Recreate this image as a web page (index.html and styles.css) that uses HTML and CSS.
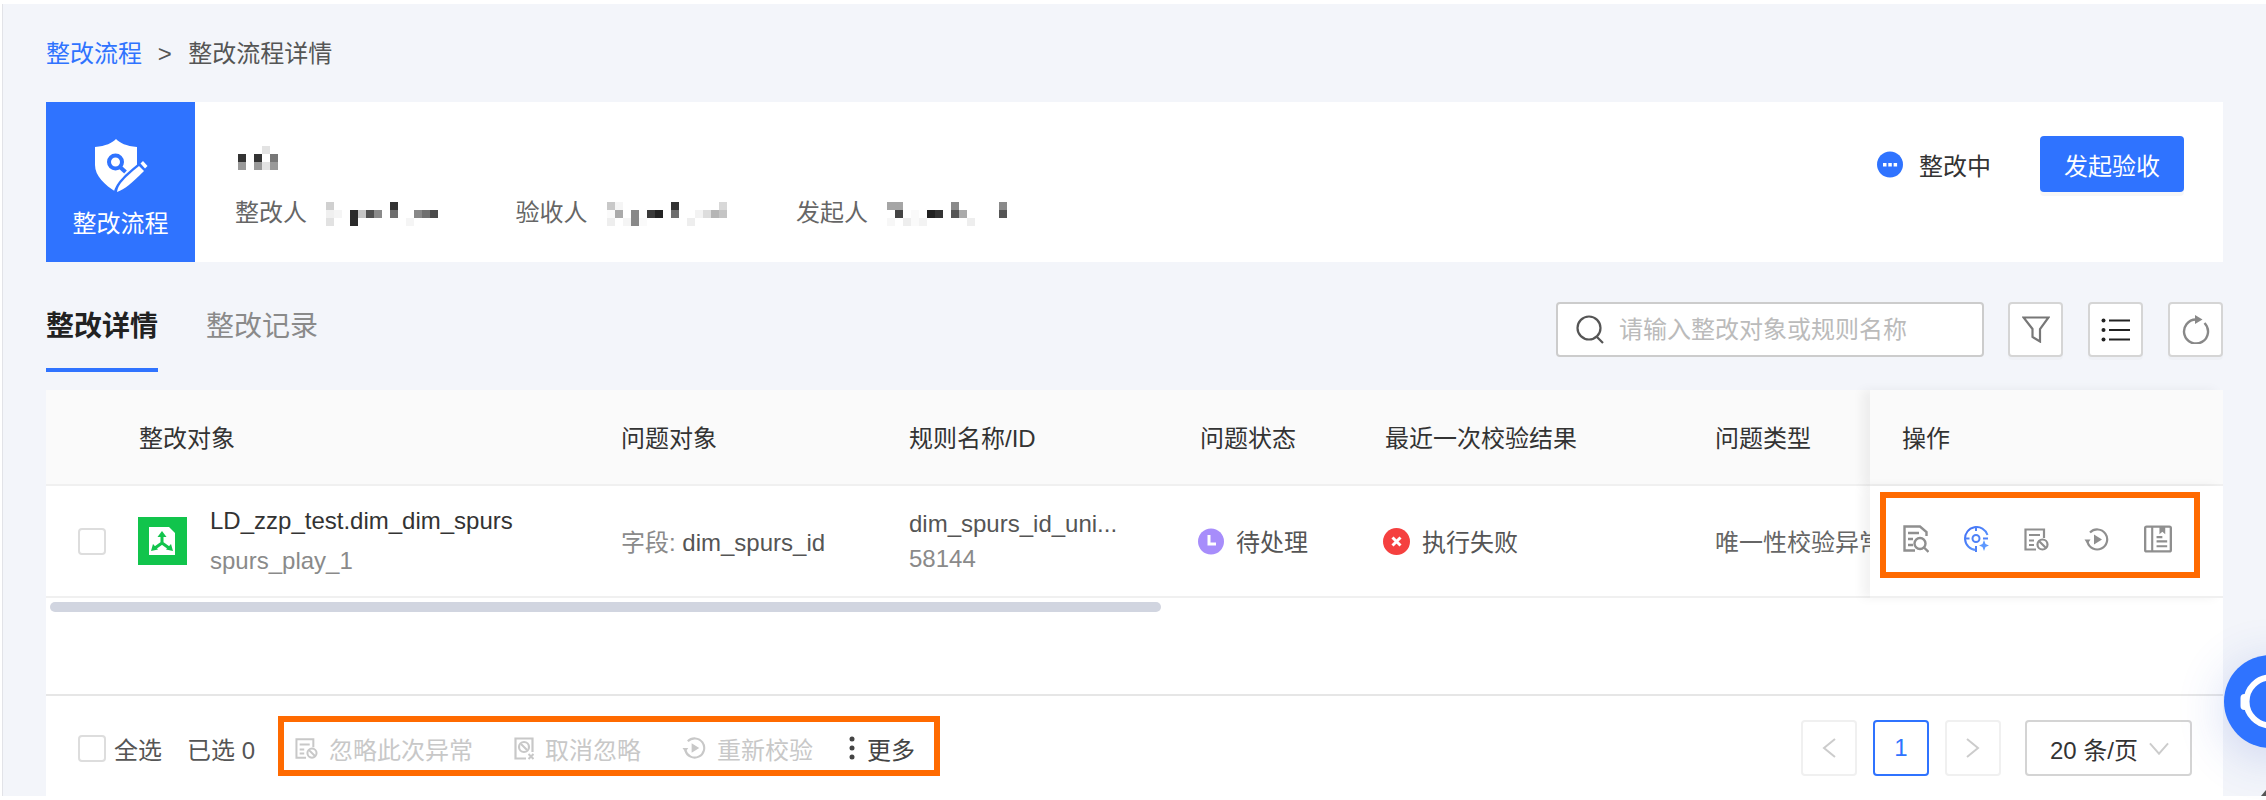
FILE: index.html
```html
<!DOCTYPE html>
<html lang="zh-CN">
<head>
    <meta charset="UTF-8">
    <title>整改流程详情</title>
    <link rel="stylesheet" href="styles.css">
</head>
<body>
    <svg class="icon-defs" width="0" height="0">
        <symbol id="i-ban" viewBox="0 0 25 23">
            <path d="M20 10V1.500H1.500V21.500H12" fill="none" stroke="currentColor" stroke-width="2.200"/>
            <path d="M5 7H16M5 12.500H10M5 17H10" fill="none" stroke="currentColor" stroke-width="2.200"/>
            <circle cx="18.500" cy="16.500" r="5" fill="none" stroke="currentColor" stroke-width="2.200"/>
            <path d="M15 13L22 20" stroke="currentColor" stroke-width="2.200"/>
        </symbol>
        <symbol id="i-replay" viewBox="0 0 25 23">
            <path d="M3.500 14A10 10 0 1 0 6 4.500" fill="none" stroke="currentColor" stroke-width="2.200"/>
            <path d="M0.500 11.500H6.500L3.500 16Z" fill="currentColor"/>
            <path d="M10 6.500L18 11.500L10 16.500Z" fill="currentColor"/>
        </symbol>
    </svg>

    <div class="page">
        <div class="breadcrumb">
            <a class="crumb-link">整改流程</a>
            <span class="crumb-sep">&gt;</span>
            <span>整改流程详情</span>
        </div>

        <div class="header-card">
            <div class="flow-badge">
                <svg width="56" height="56" viewBox="0 0 56 56">
                    <path d="M23 1C27 5 33 8 44 9V27C44 38 34 47 23 54C12 47 2 38 2 27V9C13 8 19 5 23 1Z" fill="#fff"/>
                    <path d="M20 57C22 46 29 38 50 22L58 30L30 58Z" fill="#2f73ff"/>
                    <path d="M24 54C25 47 29 42 46 28L51 33C38 46 32 51 24 54Z" fill="#fff"/>
                    <path d="M47.500 25.500L50 23L54.500 28L52 30.500Z" fill="#fff"/>
                    <circle cx="22.500" cy="24" r="6.500" fill="none" stroke="#2f73ff" stroke-width="4"/>
                    <path d="M27 29L32.500 34" stroke="#2f73ff" stroke-width="4"/>
                </svg>
                <span>整改流程</span>
            </div>
            <div class="flow-info">
                <svg class="mosaic-name" width="40" height="24" viewBox="0 0 40 24" shape-rendering="crispEdges">
                    <rect x="24" y="0" width="8" height="8" fill="#e3e3e3"/>
                    <rect x="0" y="8" width="8" height="8" fill="#333"/>
                    <rect x="16" y="8" width="8" height="8" fill="#333"/>
                    <rect x="32" y="8" width="8" height="8" fill="#777"/>
                    <rect x="0" y="16" width="8" height="8" fill="#999"/>
                    <rect x="16" y="16" width="8" height="8" fill="#999"/>
                    <rect x="24" y="16" width="8" height="8" fill="#e3e3e3"/>
                    <rect x="32" y="16" width="8" height="8" fill="#999"/>
                </svg>
                <div class="people">
                    <div class="person">
                        <span>整改人</span>
                        <svg class="mosaic" width="112" height="24" viewBox="0 0 112 24" shape-rendering="crispEdges">
                            <rect x="0" y="0" width="8" height="8" fill="#d0d0d0"/>
                            <rect x="64" y="0" width="8" height="8" fill="#333"/>
                            <rect x="0" y="8" width="8" height="8" fill="#f0f0f0"/>
                            <rect x="8" y="8" width="8" height="8" fill="#f5f5f5"/>
                            <rect x="24" y="8" width="8" height="8" fill="#2a2a2a"/>
                            <rect x="32" y="8" width="8" height="8" fill="#c4c4c4"/>
                            <rect x="40" y="8" width="8" height="8" fill="#4f4f4f"/>
                            <rect x="48" y="8" width="8" height="8" fill="#8a8a8a"/>
                            <rect x="64" y="8" width="8" height="8" fill="#6e6e6e"/>
                            <rect x="88" y="8" width="8" height="8" fill="#888"/>
                            <rect x="96" y="8" width="8" height="8" fill="#707070"/>
                            <rect x="104" y="8" width="8" height="8" fill="#4a4a4a"/>
                            <rect x="0" y="16" width="8" height="8" fill="#e2e2e2"/>
                            <rect x="24" y="16" width="8" height="8" fill="#2a2a2a"/>
                            <rect x="80" y="16" width="8" height="8" fill="#f5f5f5"/>
                        </svg>
                    </div>
                    <div class="person">
                        <span>验收人</span>
                        <svg class="mosaic" width="120" height="24" viewBox="0 0 120 24" shape-rendering="crispEdges">
                            <rect x="0" y="0" width="8" height="8" fill="#c8c8c8"/>
                            <rect x="8" y="0" width="8" height="8" fill="#f5f5f5"/>
                            <rect x="64" y="0" width="8" height="8" fill="#333"/>
                            <rect x="112" y="0" width="8" height="8" fill="#d8d8d8"/>
                            <rect x="0" y="8" width="8" height="8" fill="#fafafa"/>
                            <rect x="8" y="8" width="8" height="8" fill="#aaa"/>
                            <rect x="24" y="8" width="8" height="8" fill="#888"/>
                            <rect x="40" y="8" width="8" height="8" fill="#3a3a3a"/>
                            <rect x="48" y="8" width="8" height="8" fill="#222"/>
                            <rect x="64" y="8" width="8" height="8" fill="#6e6e6e"/>
                            <rect x="88" y="8" width="8" height="8" fill="#f3f3f3"/>
                            <rect x="96" y="8" width="8" height="8" fill="#ddd"/>
                            <rect x="104" y="8" width="8" height="8" fill="#b5b5b5"/>
                            <rect x="112" y="8" width="8" height="8" fill="#c4c4c4"/>
                            <rect x="0" y="16" width="8" height="8" fill="#eee"/>
                            <rect x="16" y="16" width="8" height="8" fill="#f5f5f5"/>
                            <rect x="24" y="16" width="8" height="8" fill="#888"/>
                            <rect x="32" y="16" width="8" height="8" fill="#fafafa"/>
                            <rect x="80" y="16" width="8" height="8" fill="#eee"/>
                        </svg>
                    </div>
                    <div class="person">
                        <span>发起人</span>
                        <svg class="mosaic" width="120" height="24" viewBox="0 0 120 24" shape-rendering="crispEdges">
                            <rect x="0" y="0" width="16" height="8" fill="#a5a5a5"/>
                            <rect x="64" y="0" width="8" height="8" fill="#8a8a8a"/>
                            <rect x="112" y="0" width="8" height="8" fill="#8a8a8a"/>
                            <rect x="8" y="8" width="8" height="8" fill="#444"/>
                            <rect x="24" y="8" width="8" height="8" fill="#fafafa"/>
                            <rect x="40" y="8" width="8" height="8" fill="#222"/>
                            <rect x="48" y="8" width="8" height="8" fill="#333"/>
                            <rect x="64" y="8" width="8" height="8" fill="#555"/>
                            <rect x="72" y="8" width="8" height="8" fill="#aaa"/>
                            <rect x="112" y="8" width="8" height="8" fill="#555"/>
                            <rect x="0" y="16" width="8" height="8" fill="#f7f7f7"/>
                            <rect x="16" y="16" width="8" height="8" fill="#eee"/>
                            <rect x="24" y="16" width="8" height="8" fill="#fafafa"/>
                            <rect x="32" y="16" width="8" height="8" fill="#f3f3f3"/>
                            <rect x="80" y="16" width="8" height="8" fill="#eee"/>
                        </svg>
                    </div>
                </div>
            </div>
            <div class="flow-state">
                <svg width="26" height="27" viewBox="0 0 26 27">
                    <circle cx="13" cy="13.500" r="13" fill="#2f73ff"/>
                    <rect x="6" y="12" width="3.500" height="3.500" fill="#fff"/>
                    <rect x="11.300" y="12" width="3.500" height="3.500" fill="#fff"/>
                    <rect x="16.600" y="12" width="3.500" height="3.500" fill="#fff"/>
                </svg>
                <span>整改中</span>
            </div>
            <button class="primary-btn">发起验收</button>
        </div>

        <div class="toolbar">
            <div class="tabs">
                <div class="tab active">整改详情</div>
                <div class="tab">整改记录</div>
            </div>
            <div class="tools">
                <div class="search-box">
                    <svg width="29" height="29" viewBox="0 0 29 29">
                        <circle cx="13" cy="13" r="11.500" fill="none" stroke="#555" stroke-width="2.200"/>
                        <path d="M21 22L27 28" stroke="#555" stroke-width="2.200"/>
                    </svg>
                    <input class="search-input" type="text" placeholder="请输入整改对象或规则名称">
                </div>
                <button class="tool-btn">
                    <svg width="28" height="27" viewBox="0 0 28 27">
                        <path d="M1.500 1.500H26.500L18 13V25.500L10.500 21V13Z" fill="none" stroke="#777" stroke-width="2.200"/>
                    </svg>
                </button>
                <button class="tool-btn">
                    <svg width="29" height="24" viewBox="0 0 29 24">
                        <circle cx="2.500" cy="2.500" r="2" fill="#222"/>
                        <circle cx="2.500" cy="12" r="2" fill="#222"/>
                        <circle cx="2.500" cy="21.500" r="2" fill="#222"/>
                        <path d="M8 2.500H29M8 12H29M8 21.500H29" stroke="#222" stroke-width="2.200"/>
                    </svg>
                </button>
                <button class="tool-btn">
                    <svg width="28" height="29" viewBox="0 0 28 29">
                        <path d="M22.500 8A12 12 0 1 1 14 4.500" fill="none" stroke="#888" stroke-width="2.400"/>
                        <path d="M13 0L20.500 4.500L13 9Z" fill="#888"/>
                    </svg>
                </button>
            </div>
        </div>

        <div class="table-card">
            <table class="issue-table">
                <colgroup>
                    <col class="col-check">
                    <col class="col-target">
                    <col class="col-object">
                    <col class="col-rule">
                    <col class="col-state">
                    <col class="col-result">
                    <col class="col-type">
                    <col class="col-ops">
                </colgroup>
                <thead>
                    <tr>
                        <th></th>
                        <th>整改对象</th>
                        <th>问题对象</th>
                        <th>规则名称/ID</th>
                        <th>问题状态</th>
                        <th>最近一次校验结果</th>
                        <th>问题类型</th>
                        <th class="ops-cell ops-head">操作</th>
                    </tr>
                </thead>
                <tbody>
                    <tr>
                        <td><span class="check check-row"></span></td>
                        <td>
                            <div class="target">
                                <svg width="49" height="48" viewBox="0 0 49 48">
                                    <rect width="49" height="48" fill="#11c44c"/>
                                    <path d="M11 10H31L37 16V38H11Z" fill="#fff"/>
                                    <path d="M24 26V18M24 26L17 31M24 26L31 31" stroke="#11c44c" stroke-width="3"/>
                                    <path d="M24 14L28.500 20H19.500Z" fill="#11c44c"/>
                                    <path d="M13 34L15 27L20 32.500Z" fill="#11c44c"/>
                                    <path d="M35 34L33 27L28 32.500Z" fill="#11c44c"/>
                                </svg>
                                <div class="target-text">
                                    <div class="target-name">LD_zzp_test.dim_dim_spurs</div>
                                    <div class="target-sub">spurs_play_1</div>
                                </div>
                            </div>
                        </td>
                        <td class="text-cell"><span class="muted">字段:</span> <span class="dark-gray">dim_spurs_id</span></td>
                        <td>
                            <div class="rule-name">dim_spurs_id_uni...</div>
                            <div class="rule-id">58144</div>
                        </td>
                        <td>
                            <div class="state">
                                <svg width="26" height="27" viewBox="0 0 26 27">
                                    <circle cx="13" cy="13.500" r="13" fill="#a78dfb"/>
                                    <path d="M11 7V16H18" fill="none" stroke="#fff" stroke-width="3"/>
                                </svg>
                                <span>待处理</span>
                            </div>
                        </td>
                        <td>
                            <div class="state">
                                <svg width="27" height="27" viewBox="0 0 27 27">
                                    <circle cx="13.500" cy="13.500" r="13.500" fill="#f5403f"/>
                                    <path d="M9.500 9.500L17.500 17.500M17.500 9.500L9.500 17.500" stroke="#fff" stroke-width="3"/>
                                </svg>
                                <span>执行失败</span>
                            </div>
                        </td>
                        <td class="text-cell type-cell">唯一性校验异常</td>
                        <td class="ops-cell ops-body">
                            <div class="mark-box mark-ops">
                                <svg class="op-icon" width="26" height="28" viewBox="0 0 26 28">
                                    <path d="M12 25.500H1.500V1.500H17L23.500 7V11" fill="none" stroke="#8f8f8f" stroke-width="2.400"/>
                                    <path d="M5 8H16M5 14H10M5 20H10" stroke="#8f8f8f" stroke-width="2.400"/>
                                    <circle cx="17" cy="18.500" r="5.500" fill="none" stroke="#8f8f8f" stroke-width="2.400"/>
                                    <path d="M21 22.500L25.500 27" stroke="#8f8f8f" stroke-width="2.400"/>
                                </svg>
                                <svg class="op-icon" width="25" height="26" viewBox="0 0 25 26">
                                    <defs>
                                        <linearGradient id="target-blue" x1="0" y1="0" x2="1" y2="1">
                                            <stop offset="0" stop-color="#3f6df5"/>
                                            <stop offset="1" stop-color="#62a0ff"/>
                                        </linearGradient>
                                    </defs>
                                    <path d="M23.500 9A11.500 11.500 0 1 0 12 24" fill="none" stroke="url(#target-blue)" stroke-width="2"/>
                                    <circle cx="12" cy="12.500" r="3.500" fill="none" stroke="#4f82f8" stroke-width="2"/>
                                    <path d="M12 0V5M12 20V26M0 12.500H5.500M19 12.500H24" stroke="#4f82f8" stroke-width="2"/>
                                    <path d="M20 14L21.500 18L25 19.500L21.500 21L20 25L18.500 21L15 19.500L18.500 18Z" fill="#5d98ff"/>
                                </svg>
                                <svg class="op-icon op-gray" width="25" height="23"><use href="#i-ban"/></svg>
                                <svg class="op-icon op-gray" width="25" height="23"><use href="#i-replay"/></svg>
                                <svg class="op-icon" width="28" height="28" viewBox="0 0 29 28">
                                    <rect x="1.200" y="1.200" width="26.600" height="25.600" rx="1.500" fill="none" stroke="#8f8f8f" stroke-width="2.400"/>
                                    <path d="M8.500 1V27" stroke="#8f8f8f" stroke-width="2.200"/>
                                    <path d="M16 1H22V9L19 6.500L16 9Z" fill="#8f8f8f"/>
                                    <path d="M13 12H19M13 16.500H24M13 21.500H24" stroke="#8f8f8f" stroke-width="2.200"/>
                                </svg>
                            </div>
                        </td>
                    </tr>
                </tbody>
            </table>
            <div class="scroll-thumb"></div>

            <div class="table-footer">
                <div class="select-all">
                    <span class="check"></span>
                    <span class="select-label">全选</span>
                    <span class="select-count">已选 0</span>
                </div>
                <div class="mark-box mark-batch">
                    <div class="batch-item">
                        <svg width="23" height="21"><use href="#i-ban"/></svg>
                        <span>忽略此次异常</span>
                    </div>
                    <div class="batch-item">
                        <svg width="20" height="23" viewBox="0 0 20 23">
                            <path d="M12 21.500H1.500V1.500H18.500V15" fill="none" stroke="currentColor" stroke-width="2.200"/>
                            <circle cx="10" cy="10" r="5" fill="none" stroke="currentColor" stroke-width="2.200"/>
                            <path d="M7 7L13 13M14.500 17L19.500 22M19.500 17L14.500 22" stroke="currentColor" stroke-width="2"/>
                        </svg>
                        <span>取消忽略</span>
                    </div>
                    <div class="batch-item batch-replay">
                        <svg width="24" height="22"><use href="#i-replay"/></svg>
                        <span>重新校验</span>
                    </div>
                    <div class="batch-more">
                        <svg width="6" height="24" viewBox="0 0 6 24">
                            <circle cx="3" cy="3" r="2.500" fill="#444"/>
                            <circle cx="3" cy="12" r="2.500" fill="#444"/>
                            <circle cx="3" cy="21" r="2.500" fill="#444"/>
                        </svg>
                        <span>更多</span>
                    </div>
                </div>
                <div class="pager">
                    <button class="page-btn disabled">
                        <svg width="14" height="20" viewBox="0 0 14 20"><path d="M13 1L2 10L13 19" fill="none" stroke="#ccc" stroke-width="2"/></svg>
                    </button>
                    <button class="page-btn current">1</button>
                    <button class="page-btn disabled">
                        <svg width="14" height="20" viewBox="0 0 14 20"><path d="M1 1L12 10L1 19" fill="none" stroke="#ccc" stroke-width="2"/></svg>
                    </button>
                    <div class="page-size">
                        <span>20 条/页</span>
                        <svg width="20" height="13" viewBox="0 0 21 13"><path d="M1 1L10.500 12L20 1" fill="none" stroke="#ccc" stroke-width="2"/></svg>
                    </div>
                </div>
            </div>
        </div>
    </div>

    <div class="help-float">
        <svg width="93" height="93" viewBox="0 0 93 93">
            <circle cx="46.500" cy="46.500" r="24" fill="none" stroke="#fff" stroke-width="6"/>
            <rect x="16.500" y="39" width="8" height="16" rx="4" fill="#fff"/>
        </svg>
    </div>
    <div class="corner-mark"></div>
</body>
</html>
```

FILE: styles.css
```css
* {
    box-sizing: border-box;
    margin: 0;
    padding: 0;
    font-family: "Liberation Sans", "Noto Sans CJK SC", sans-serif;
}

html, body {
    height: 800px;
    overflow: hidden;
}

body {
    position: relative;
    background-color: #fff;
    color: #333;
    font-size: 24px;
}

button {
    font-size: 24px;
    background: none;
    cursor: pointer;
}

.icon-defs {
    display: block;
    height: 0;
}

.page {
    height: 792px;
    margin: 4px 0 0 2px;
    padding: 0 43px;
    background-color: #f3f5fa;
    border-left: 1px solid #e2e3e8;
}

.breadcrumb {
    height: 98px;
    padding-top: 26px;
    line-height: 48px;
    color: #555;
    white-space: nowrap;
}

.crumb-link {
    color: #2f73ff;
}

.crumb-sep {
    margin: 0 10px 0 9px;
}

/* 头部卡片 */
.header-card {
    display: flex;
    height: 160px;
    background-color: #fff;
}

.flow-badge {
    display: flex;
    flex-direction: column;
    align-items: center;
    width: 149px;
    padding-top: 36px;
    background-color: #2f73ff;
    color: #fff;
    line-height: 36px;
}

.flow-badge span {
    margin-top: 12px;
}

.flow-info {
    flex: 1;
    padding: 44px 0 0 40px;
}

.mosaic-name {
    display: block;
    margin-left: 3px;
}

.people {
    display: flex;
    margin-top: 25px;
}

.person {
    display: flex;
    align-items: center;
    width: 280.500px;
    line-height: 36px;
    color: #666;
}

.mosaic {
    margin: 2px 0 0 19px;
}

.flow-state {
    display: flex;
    align-items: center;
    gap: 16px;
    height: 56px;
    margin-top: 34px;
    color: #333;
}

.primary-btn {
    width: 144px;
    height: 56px;
    margin: 34px 39px 0 49px;
    border: none;
    border-radius: 4px;
    background-color: #2f73ff;
    color: #fff;
    box-shadow: 0 4px 0 rgba(0,0,0,0.03);
}

/* 工具栏 */
.toolbar {
    display: flex;
    justify-content: space-between;
    height: 128px;
    padding-top: 40px;
}

.tabs {
    display: flex;
    gap: 48px;
}

.tab {
    height: 70px;
    line-height: 50px;
    font-size: 28px;
    color: #8a8a8a;
}

.tab.active {
    color: #222;
    font-weight: 700;
    border-bottom: 4px solid #2f73ff;
}

.tools {
    display: flex;
    gap: 25px;
}

.search-box {
    display: flex;
    align-items: center;
    gap: 14px;
    width: 428px;
    height: 55px;
    margin-right: -1px;
    padding-left: 18px;
    background-color: #fff;
    border: 2px solid #ccc;
    border-radius: 4px;
}

.search-input {
    flex: 1;
    min-width: 0;
    border: none;
    outline: none;
    font-size: 24px;
    color: #333;
}

.search-input::placeholder {
    color: #bbb;
}

.tool-btn {
    display: flex;
    align-items: center;
    justify-content: center;
    width: 55px;
    height: 55px;
    background-color: #fff;
    border: 2px solid #d5d5d5;
    border-radius: 4px;
    box-shadow: 0 3px 0 rgba(0,0,0,0.02);
}

/* 表格 */
.table-card {
    display: flex;
    flex-direction: column;
    height: 406px;
    background-color: #fff;
}

.issue-table {
    width: 100%;
    table-layout: fixed;
    border-collapse: separate;
    border-spacing: 0;
}

.col-check { width: 93px; }
.col-target { width: 482px; }
.col-object { width: 288px; }
.col-rule { width: 291px; }
.col-state { width: 185px; }
.col-result { width: 330px; }
.col-type { width: 155px; }
.col-ops { width: 353px; }

.issue-table th {
    height: 96px;
    padding-bottom: 2px;
    background-color: #fafafa;
    border-bottom: 2px solid #f0f0f0;
    font-weight: 400;
    text-align: left;
    color: #333;
}

.issue-table td {
    height: 112px;
    border-bottom: 2px solid #f0f0f0;
    color: #666;
}

.issue-table .text-cell {
    padding-bottom: 2px;
}

.check {
    display: block;
    width: 28px;
    height: 27px;
    background-color: #fff;
    border: 2px solid #ddd;
    border-radius: 4px;
}

.check-row {
    margin-left: 32px;
}

.target {
    display: flex;
    align-items: center;
    gap: 23px;
    margin-left: -1px;
}

.target-name {
    line-height: 40px;
    color: #333;
    white-space: nowrap;
}

.target-sub {
    line-height: 40px;
    color: #8a8a8a;
}

.muted {
    color: #8a8a8a;
}

.dark-gray {
    color: #555;
}

.rule-name {
    line-height: 35px;
    color: #555;
}

.rule-id {
    line-height: 35px;
    color: #8a8a8a;
}

.state {
    display: flex;
    align-items: center;
    gap: 12px;
    margin-left: -2px;
    color: #555;
}

.state span {
    margin-top: -2px;
}

.type-cell {
    white-space: nowrap;
    overflow: hidden;
}

.ops-cell {
    position: relative;
    background-color: #fff;
    box-shadow: -8px 0 10px rgba(0,0,0,0.05);
}

.issue-table .ops-head {
    padding-left: 32px;
    background-color: #fafafa;
}

.issue-table .ops-body {
    padding: 6px 0 0 10px;
    vertical-align: top;
}

/* 橙色标注框 */
.mark-box {
    display: flex;
    align-items: center;
    border: 6px solid #ff6a00;
}

.mark-ops {
    gap: 35px;
    width: 320px;
    height: 86px;
    padding: 8px 0 0 17px;
}

.op-gray {
    color: #8f8f8f;
}

.scroll-thumb {
    width: 1111px;
    height: 10px;
    margin: 4px 0 0 4px;
    background-color: #d1d5e0;
    border-radius: 5px;
}

.table-footer {
    position: relative;
    display: flex;
    align-items: center;
    height: 102px;
    margin-top: auto;
    padding-left: 32px;
    border-top: 2px solid #e6e6e6;
}

.select-all {
    display: flex;
    align-items: center;
    width: 200px;
    margin-top: 4px;
    color: #555;
}

.select-label {
    margin-left: 8px;
}

.select-count {
    margin-left: 25px;
    white-space: nowrap;
}

.mark-batch {
    width: 662px;
    height: 60px;
    padding: 4px 0 0 11px;
}

.batch-item {
    display: flex;
    align-items: center;
    gap: 11px;
    margin-right: 41px;
    color: #c8c8c8;
    white-space: nowrap;
}

.batch-replay {
    margin-right: 36px;
}

.batch-more {
    display: flex;
    align-items: center;
    gap: 12px;
    color: #444;
    white-space: nowrap;
}

.pager {
    display: flex;
    gap: 16px;
    height: 56px;
    margin: 4px 31px 0 auto;
}

.page-btn {
    display: flex;
    align-items: center;
    justify-content: center;
    width: 56px;
    height: 56px;
    border: 2px solid #f0f0f0;
    border-radius: 4px;
    background-color: #fff;
}

.page-btn.current {
    border-color: #2f73ff;
    color: #2f73ff;
}

.page-size {
    display: flex;
    align-items: center;
    gap: 11px;
    width: 167px;
    height: 56px;
    margin-left: 8px;
    padding-left: 23px;
    border: 2px solid #d4d4d4;
    border-radius: 4px;
    color: #333;
    white-space: nowrap;
}

/* 右下悬浮按钮 */
.help-float {
    position: absolute;
    top: 655px;
    right: -51px;
    width: 93px;
    height: 93px;
    background-color: #2f73ff;
    border-radius: 50%;
    box-shadow: 0 8px 50px rgba(47,80,200,0.2);
}

.help-float svg {
    display: block;
}

.corner-mark {
    position: absolute;
    right: 0;
    top: 790px;
    width: 5px;
    height: 6px;
    background-color: #555;
    clip-path: polygon(100% 0, 100% 100%, 0 100%);
}
```
